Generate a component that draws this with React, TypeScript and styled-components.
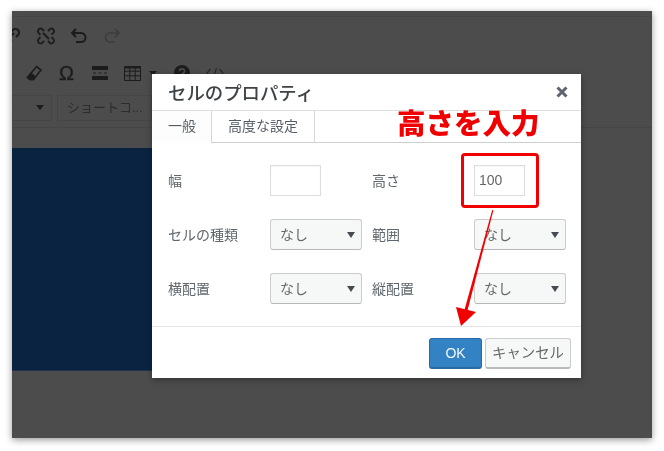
import React from 'react'
import styled, { createGlobalStyle } from 'styled-components'

const GlobalStyle = createGlobalStyle`
    html, body {
        margin: 0;
        padding: 0;
        background: #fff;
    }

    body {
        font-family: "Liberation Sans", "Noto Sans CJK JP", sans-serif;
    }
`

const Page = styled.div`
    width: 664px;
    height: 451px;
    padding: 11px 0 0 12px;
    box-sizing: border-box;
    overflow: hidden;
    filter: blur(0.3px);
`

const Shot = styled.div`
    position: relative;
    width: 640px;
    height: 427px;
    overflow: hidden;
    display: flex;
    flex-direction: column;
    background-color: #4c4c4c;
    box-shadow: 0 2px 7px rgba(0, 0, 0, 0.4);
`

const TopStrip = styled.div`
    height: 5px;
    flex: none;
    border-bottom: 1px solid #464646;
`

const ToolRow = styled.div<{ $height: number; $lined?: boolean }>`
    height: ${p => p.$height}px;
    flex: none;
    box-sizing: border-box;
    position: relative;
    display: flex;
    align-items: center;
    color: #1c1c1c;
    padding-bottom: ${p => (p.$lined ? 3 : 0)}px;
    border-bottom: ${p => (p.$lined ? '1px solid #454545' : 'none')};
`

const Tool = styled.span<{ $left: number; $dim?: boolean }>`
    position: absolute;
    left: ${p => p.$left}px;
    display: flex;
    align-items: center;
    justify-content: center;
    color: ${p => (p.$dim ? '#3c3c3c' : '#1c1c1c')};
`

const OmegaGlyph = styled.span`
    font-size: 20px;
    font-weight: 400;
    line-height: 20px;
    -webkit-text-stroke: 0.4px #1c1c1c;
`

const Caret = styled.span`
    width: 0;
    height: 0;
    border-left: 4px solid transparent;
    border-right: 4px solid transparent;
    border-top: 5px solid #1c1c1c;
`

const ShortcodeBox = styled.div`
    position: absolute;
    left: 45px;
    width: 95px;
    height: 26px;
    box-sizing: border-box;
    padding-left: 9px;
    border: 1px solid #454545;
    border-radius: 2px;
    font-size: 13px;
    line-height: 24px;
    color: #2c2c2c;
    white-space: nowrap;
`

const LeftSelectEdge = styled.div`
    position: absolute;
    left: 0;
    width: 40px;
    height: 26px;
    box-sizing: border-box;
    border: 1px solid #454545;
    border-left: none;
    border-radius: 2px;
    display: flex;
    align-items: center;
    justify-content: flex-end;
    padding-right: 7px;
`

const GapStrip = styled.div`
    height: 20px;
    flex: none;
`

const NavyBlock = styled.div`
    width: 420px;
    height: 223px;
    flex: none;
    background-color: #0a2340;
    border-bottom: 1px solid #1f3350;
    box-sizing: border-box;
`

const Dialog = styled.div`
    position: absolute;
    left: 140px;
    top: 63px;
    width: 429px;
    height: 304px;
    display: flex;
    flex-direction: column;
    background-color: #fff;
    box-shadow: 0 2px 6px rgba(0, 0, 0, 0.35);
`

const DialogHead = styled.div`
    height: 37px;
    flex: none;
    box-sizing: border-box;
    display: flex;
    align-items: center;
    justify-content: space-between;
    padding: 0 13px 0 16px;
    border-bottom: 1px solid #dedede;
`

const DialogTitle = styled.h2`
    margin: 0;
    font-size: 18.4px;
    font-weight: 500;
    color: #3f4347;
`

const CloseIcon = styled.svg`
    width: 12px;
    height: 12px;
    display: block;
`

const TabBar = styled.div`
    height: 32px;
    flex: none;
    box-sizing: border-box;
    display: flex;
    border-bottom: 1px solid #cfcfcf;
`

const Tab = styled.div<{ $active?: boolean }>`
    height: ${p => (p.$active ? 32 : 31)}px;
    width: ${p => (p.$active ? '60px' : '103px')};
    box-sizing: border-box;
    padding-left: 16px;
    font-size: 14px;
    line-height: 30px;
    color: #555d66;
    background-color: ${p => (p.$active ? '#fdfdfd' : '#fff')};
    border-right: 1px solid #d8d8d8;
    white-space: nowrap;
`

const FormGrid = styled.div`
    flex: 1;
    display: grid;
    grid-template-columns: 102px 102px 102px 1fr;
    grid-auto-rows: 31px;
    row-gap: 23px;
    align-items: center;
    padding: 22px 0 0 16px;
`

const FieldLabel = styled.label`
    font-size: 14px;
    color: #5f666c;
    white-space: nowrap;
    padding-bottom: 2px;
`

const TextBox = styled.div`
    width: 51px;
    height: 31px;
    box-sizing: border-box;
    border: 1px solid #dddddd;
    font-size: 14px;
    line-height: 29px;
    padding-left: 4px;
    color: #666;
    background-color: #fff;
    box-shadow: inset 0 1px 2px rgba(0, 0, 0, 0.04);
`

const SelectBox = styled.div`
    width: 92px;
    height: 31px;
    box-sizing: border-box;
    border: 1px solid #cccccc;
    border-bottom-color: #b8b8b8;
    border-radius: 3px;
    background-color: #f6f7f7;
    display: flex;
    align-items: center;
    justify-content: space-between;
    padding: 0 6px 0 9px;
    font-size: 14px;
    color: #666;
`

const SelectText = styled.span`
    padding-bottom: 2px;
`

const SelectCaret = styled.span`
    width: 0;
    height: 0;
    margin-top: 1px;
    border-left: 4px solid transparent;
    border-right: 4px solid transparent;
    border-top: 6px solid #444b52;
`

const DialogFoot = styled.div`
    height: 52px;
    flex: none;
    box-sizing: border-box;
    display: flex;
    justify-content: flex-end;
    gap: 3px;
    padding: 11px 10px 0 0;
    border-top: 1px solid #e3e3e3;
`

const OkButton = styled.div`
    width: 53px;
    height: 31px;
    box-sizing: border-box;
    border: 1px solid #2a6aa5;
    border-bottom-width: 2px;
    border-radius: 3px;
    background-color: #3382c4;
    color: #f2f7fb;
    font-size: 14px;
    line-height: 28px;
    text-align: center;
`

const CancelButton = styled.div`
    width: 86px;
    height: 31px;
    box-sizing: border-box;
    border: 1px solid #cccccc;
    border-bottom: 2px solid #bbbbbb;
    border-radius: 3px;
    background-color: #f6f7f7;
    color: #666;
    font-size: 14.4px;
    line-height: 28px;
    text-align: center;
    white-space: nowrap;
`

const Callout = styled.div`
    position: absolute;
    left: 385px;
    top: 95px;
    font-size: 28.5px;
    line-height: 36px;
    font-weight: 900;
    color: #f00000;
    white-space: nowrap;
`

const HighlightBox = styled.div`
    position: absolute;
    left: 449px;
    top: 142px;
    width: 78px;
    height: 55px;
    box-sizing: border-box;
    border: 3px solid #f00000;
    border-radius: 4px;
`

const ArrowLayer = styled.svg`
    position: absolute;
    left: 0;
    top: 0;
    width: 640px;
    height: 427px;
    pointer-events: none;
`

const fields = [
    { label: 'セルの種類', side: '範囲' },
    { label: '横配置', side: '縦配置' }
]

export default function App() {
    return (
        <>
            <GlobalStyle />
            <Page>
                <Shot>
                    <TopStrip />

                    <ToolRow $height={38}>
                        <Tool $left={-12}>
                            <svg width="22" height="22" viewBox="0 0 22 22" fill="none" stroke="#1c1c1c" strokeWidth="2">
                                <path d="M9 13l5-5M7 10l-2 2a3.5 3.5 0 0 0 5 5l2-2M11 7l2-2a3.5 3.5 0 0 1 5 5l-2 2" />
                            </svg>
                        </Tool>
                        <Tool $left={24}>
                            <svg width="20" height="20" viewBox="0 0 20 20" fill="none" stroke="#1c1c1c" strokeWidth="1.8">
                                <path d="M8 5L6 3a2.6 2.6 0 0 0-3.6 3.6L4.5 9M12 15l2 2a2.6 2.6 0 0 0 3.6-3.6L15.5 11M12 5l2-2a2.6 2.6 0 0 1 3.6 3.6L15.5 8.5M8 15l-2 2a2.6 2.6 0 0 1-3.6-3.6L4.5 11M7 7l6 6" />
                            </svg>
                        </Tool>
                        <Tool $left={58}>
                            <svg width="18" height="16" viewBox="0 0 18 16" fill="none" stroke="#1c1c1c" strokeWidth="2">
                                <path d="M6 1L2 5l4 4M2 5h9a4.5 4.5 0 0 1 0 9H6" />
                            </svg>
                        </Tool>
                        <Tool $left={91} $dim>
                            <svg width="18" height="16" viewBox="0 0 18 16" fill="none" stroke="#3c3c3c" strokeWidth="1.6">
                                <path d="M12 1l4 4-4 4M16 5H7a4.5 4.5 0 0 0 0 9h5" />
                            </svg>
                        </Tool>
                    </ToolRow>

                    <ToolRow $height={36}>
                        <Tool $left={14}>
                            <svg width="16" height="16" viewBox="0 0 16 16" fill="none" stroke="#1c1c1c" strokeWidth="1.6">
                                <path d="M10.5 1.5L15 5l-7.5 9.5H4L1.5 12.5z" />
                                <path d="M1.5 12.5L5 8.5l4 3.5-1.5 2.5H4z" fill="#1c1c1c" />
                            </svg>
                        </Tool>
                        <Tool $left={47}>
                            <OmegaGlyph>Ω</OmegaGlyph>
                        </Tool>
                        <Tool $left={80}>
                            <svg width="16" height="14" viewBox="0 0 16 14" fill="#1c1c1c">
                                <path d="M0 0h16v4H0zM0 10h16v4H0zM1 6.4h3v1.2H1zM6.5 6.4h3v1.2h-3zM12 6.4h3v1.2h-3z" />
                            </svg>
                        </Tool>
                        <Tool $left={112}>
                            <svg width="17" height="15" viewBox="0 0 17 15" fill="none" stroke="#1c1c1c">
                                <path d="M.5 .5h16v14H.5zM.5 5.2h16M.5 9.8h16M5.8 .5v14M11.2 .5v14" />
                                <path d="M.5 1.5h16" strokeWidth="2" />
                            </svg>
                        </Tool>
                        <Tool $left={137}>
                            <Caret />
                        </Tool>
                        <Tool $left={162}>
                            <svg width="16" height="16" viewBox="0 0 16 16">
                                <circle cx="8" cy="8" r="8" fill="#1c1c1c" />
                                <path d="M5.5 6.2a2.5 2.3 0 1 1 3.6 2.1c-.8.4-1.1.8-1.1 1.6" fill="none" stroke="#4c4c4c" strokeWidth="1.7" />
                                <path d="M7 11h2v2H7z" fill="#4c4c4c" />
                            </svg>
                        </Tool>
                        <Tool $left={194}>
                            <svg width="18" height="12" viewBox="0 0 18 12" fill="none" stroke="#2a2a2a" strokeWidth="1.2">
                                <path d="M4.5 2L1 6l3.5 4M13.5 2L17 6l-3.5 4M10.5 1l-3 10" />
                            </svg>
                        </Tool>
                    </ToolRow>

                    <ToolRow $height={37} $lined>
                        <LeftSelectEdge>
                            <Caret />
                        </LeftSelectEdge>
                        <ShortcodeBox>ショートコ...</ShortcodeBox>
                    </ToolRow>

                    <GapStrip />
                    <NavyBlock />

                    <Dialog>
                        <DialogHead>
                            <DialogTitle>セルのプロパティ</DialogTitle>
                            <CloseIcon viewBox="0 0 12 12">
                                <path d="M1.5 1.5l9 9M10.5 1.5l-9 9" stroke="#5d646b" strokeWidth="3" />
                            </CloseIcon>
                        </DialogHead>

                        <TabBar>
                            <Tab $active>一般</Tab>
                            <Tab>高度な設定</Tab>
                        </TabBar>

                        <FormGrid>
                            <FieldLabel>幅</FieldLabel>
                            <TextBox />
                            <FieldLabel>高さ</FieldLabel>
                            <TextBox>100</TextBox>

                            {fields.map(f => (
                                <React.Fragment key={f.label}>
                                    <FieldLabel>{f.label}</FieldLabel>
                                    <SelectBox><SelectText>なし</SelectText><SelectCaret /></SelectBox>
                                    <FieldLabel>{f.side}</FieldLabel>
                                    <SelectBox><SelectText>なし</SelectText><SelectCaret /></SelectBox>
                                </React.Fragment>
                            ))}
                        </FormGrid>

                        <DialogFoot>
                            <OkButton>OK</OkButton>
                            <CancelButton>キャンセル</CancelButton>
                        </DialogFoot>
                    </Dialog>

                    <Callout>高さを入力</Callout>
                    <HighlightBox />
                    <ArrowLayer viewBox="0 0 640 427">
                        <path d="M480.2 199L481.4 199.3L455.5 299.5L452.5 298.8z" fill="#f00000" />
                        <path d="M449 315L444 296L464 301z" fill="#f00000" />
                    </ArrowLayer>
                </Shot>
            </Page>
        </>
    )
}
